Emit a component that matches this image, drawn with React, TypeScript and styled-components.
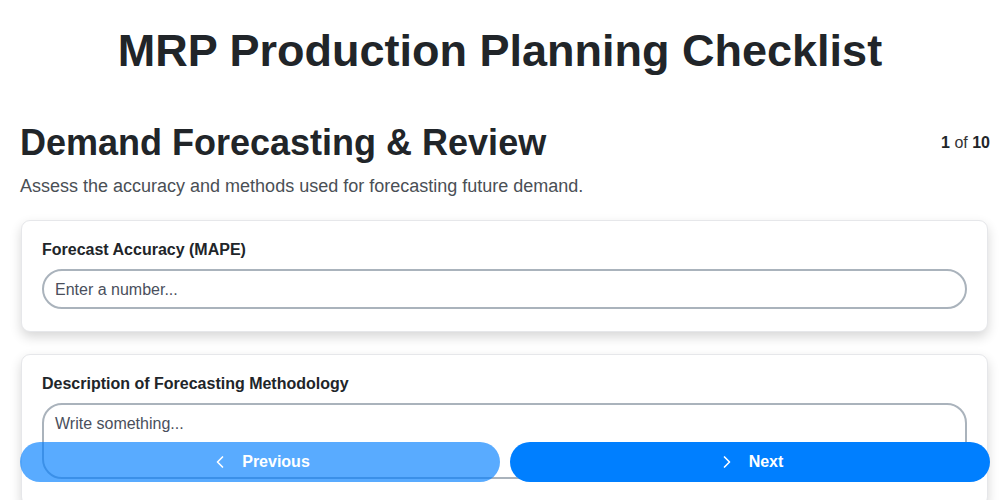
import React, { useState } from 'react'
import styled, { createGlobalStyle } from 'styled-components'
import { ChevronLeft, ChevronRight } from 'lucide-react'

const GlobalStyle = createGlobalStyle`
  body {
    margin: 0;
    background: #ffffff;
    font-family: 'Liberation Sans', Arial, sans-serif;
    color: #212529;
  }
`

const Page = styled.div`
  padding: 0 10px 0 20px;
`

const Title = styled.h1`
  margin: 0;
  padding-top: 24px;
  text-align: center;
  font-size: 45px;
  line-height: 53px;
  font-weight: 700;
  color: #212529;
`

const SectionHead = styled.div`
  display: flex;
  justify-content: space-between;
  align-items: center;
  margin-top: 44px;
`

const SectionTitle = styled.h2`
  margin: 0;
  font-size: 36px;
  line-height: 43px;
  font-weight: 700;
`

const Counter = styled.div`
  font-size: 16px;
  color: #333;

  b {
    color: #212529;
  }
`

const Subtitle = styled.p`
  margin: 12px 0 0;
  font-size: 18px;
  line-height: 20px;
  color: #4a4f55;
`

const Questions = styled.div`
  display: flex;
  flex-direction: column;
  gap: 22px;
  margin-top: 24px;
  padding: 0 2px 0 1px;
`

const Card = styled.div`
  background: #fff;
  border: 1px solid #e6e7ea;
  border-radius: 9px;
  box-shadow: 0 5px 12px rgba(0, 0, 0, 0.16);
  padding: 20px 20px 22px;
`

const Label = styled.label`
  display: block;
  font-size: 16px;
  font-weight: 700;
  line-height: 18px;
  margin-bottom: 10px;
  color: #212529;
`

const TextInput = styled.input`
  box-sizing: border-box;
  width: 100%;
  height: 40px;
  border: 2px solid #aab3bc;
  border-radius: 20px;
  padding: 1px 11px 0;
  font-family: inherit;
  font-size: 16px;
  color: #333;
  outline: none;

  &::placeholder {
    color: #4a4f5c;
  }
`

const TextArea = styled.textarea`
  box-sizing: border-box;
  width: 100%;
  height: 76px;
  border: 2px solid #aab3bc;
  border-radius: 20px;
  padding: 10px 11px 9px;
  font-family: inherit;
  font-size: 16px;
  resize: none;
  outline: none;

  &::placeholder {
    color: #4a4f5c;
  }
`

const Footer = styled.div`
  position: fixed;
  left: 20px;
  right: 10px;
  bottom: 18px;
  display: flex;
  gap: 10px;
`

const NavButton = styled.button<{ $muted?: boolean }>`
  flex: 1;
  height: 40px;
  border: none;
  border-radius: 20px;
  background: #007fff;
  opacity: ${(p) => (p.$muted ? 0.65 : 1)};
  color: #fff;
  font-family: inherit;
  font-size: 16px;
  font-weight: 700;
  display: flex;
  align-items: center;
  justify-content: center;
  gap: 12px;
  cursor: pointer;
`

const App: React.FC = () => {
  const [step] = useState(1)

  return (
    <>
      <GlobalStyle />
      <Title>MRP Production Planning Checklist</Title>
      <Page>
        <SectionHead>
          <SectionTitle>Demand Forecasting &amp; Review</SectionTitle>
          <Counter>
            <b>{step}</b> of <b>10</b>
          </Counter>
        </SectionHead>
        <Subtitle>
          Assess the accuracy and methods used for forecasting future demand.
        </Subtitle>
        <Questions>
          <Card>
            <Label>Forecast Accuracy (MAPE)</Label>
            <TextInput type="text" placeholder="Enter a number..." />
          </Card>
          <Card>
            <Label>Description of Forecasting Methodology</Label>
            <TextArea placeholder="Write something..." />
          </Card>
        </Questions>
      </Page>
      <Footer>
        <NavButton $muted>
          <ChevronLeft size={20} strokeWidth={2} />
          Previous
        </NavButton>
        <NavButton>
          <ChevronRight size={20} strokeWidth={2} />
          Next
        </NavButton>
      </Footer>
    </>
  )
}

export default App
